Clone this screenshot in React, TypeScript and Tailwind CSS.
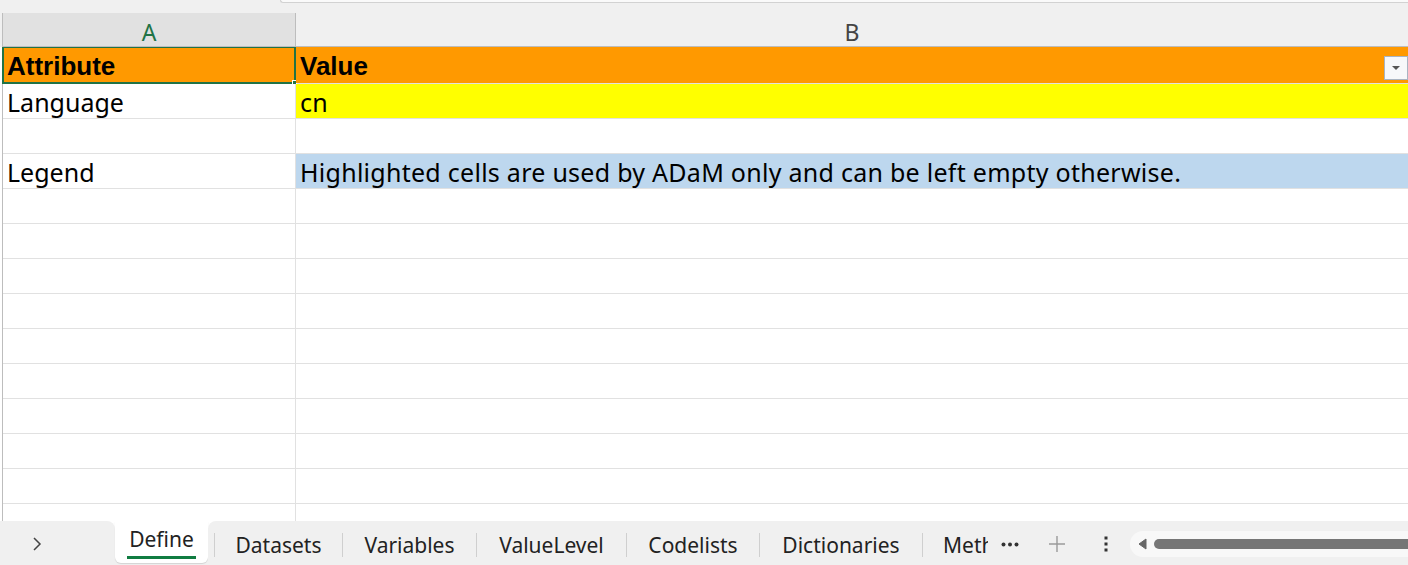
import React from "react";

const FONT = { fontFamily: '"Noto Sans", "Liberation Sans", Arial, sans-serif' };
const BOLDFONT = { fontFamily: '"Liberation Sans", Arial, sans-serif' };

function Row({
  a,
  b,
  aBg = "",
  bBg = "",
  bold = false,
  first = false,
  filter = false,
}: {
  a?: string;
  b?: string;
  aBg?: string;
  bBg?: string;
  bold?: boolean;
  first?: boolean;
  filter?: boolean;
}) {
  const txt = bold
    ? "text-[26px] leading-none text-black font-bold pt-[1px]"
    : "text-[25px] leading-none text-black pt-[3px]";
  return (
    <div className={`flex ${first ? "h-[37px]" : "h-[35px]"} border-b border-[#e1e1e1] shrink-0`}>
      <div className={`relative w-[293px] shrink-0 border-r border-[#e1e1e1] flex items-center pl-[4px] ${aBg}`}>
        {first && (
          <div className="absolute left-[-1px] top-[-1px] right-[-1px] bottom-[-1px] border-2 border-[#217346] pointer-events-none">
            <div className="absolute right-[-3px] bottom-[-3px] w-[5px] h-[5px] bg-[#217346] border border-white" />
          </div>
        )}
        <span className={txt} style={bold ? BOLDFONT : undefined}>
          {a}
        </span>
      </div>
      <div className={`relative flex-1 flex items-center pl-[4px] ${bBg}`}>
        <span className={`${txt} whitespace-nowrap ${bold ? "" : "tracking-[0.27px]"}`} style={bold ? BOLDFONT : undefined}>
          {b}
        </span>
        {filter && (
          <div className="absolute right-0 top-[9px] w-[24px] h-[24px] bg-[#f7f8fa] border border-[#a9b4c2] flex items-center justify-center">
            <svg width="10" height="6" viewBox="0 0 10 6">
              <path d="M1 1 L9 1 L5 5 Z" fill="#555" />
            </svg>
          </div>
        )}
      </div>
    </div>
  );
}

const tabs: { label: string; w: string }[] = [
  { label: "Datasets", w: "w-[127px]" },
  { label: "Variables", w: "w-[133px]" },
  { label: "ValueLevel", w: "w-[149px]" },
  { label: "Codelists", w: "w-[132px]" },
  { label: "Dictionaries", w: "w-[162px]" },
];

export default function App() {
  return (
    <div className="w-[1408px] h-[565px] overflow-hidden bg-[#f0f0f0] flex flex-col" style={FONT}>
      {/* top strip */}
      <div className="h-[13px] flex shrink-0">
        <div className="w-[280px] shrink-0" />
        <div className="flex-1 h-[3px] bg-[#fafafa] border-b border-l border-[#d2d2d2] rounded-bl-[6px]" />
      </div>
      {/* column headers */}
      <div className="h-[34px] flex shrink-0 pl-[2px]">
        <div className="w-[294px] shrink-0 bg-[#e1e1e1] border-l border-[#bdbdbd] border-r border-r-[#bdbdbd] border-b border-b-[#bdbdbd] flex items-center justify-center text-[23px] leading-none pt-[5px] text-[#217346]">
          A
        </div>
        <div className="flex-1 border-b border-[#bdbdbd] flex items-center justify-center text-[23px] leading-none pt-[5px] text-[#444]">
          B
        </div>
      </div>
      {/* grid */}
      <div className="flex-1 bg-white pl-[2px] overflow-hidden">
        <div className="border-l border-[#bdbdbd] h-full flex flex-col">
          <Row a="Attribute" b="Value" aBg="bg-[#ff9900]" bBg="bg-[#ff9900]" bold first filter />
          <Row a="Language" b="cn" bBg="bg-[#ffff00]" />
          <Row />
          <Row a="Legend" b="Highlighted cells are used by ADaM only and can be left empty otherwise." bBg="bg-[#bdd7ee]" />
          <Row />
          <Row />
          <Row />
          <Row />
          <Row />
          <Row />
          <Row />
          <Row />
          <Row />
          <Row />
        </div>
      </div>
      {/* tab bar */}
      <div className="h-[44px] shrink-0 bg-white flex">
        <div className="w-[115px] shrink-0 bg-[#f0f0f0] rounded-tr-[8px] flex items-center pl-[31px] pt-[2px]">
          <svg width="12" height="16" viewBox="0 0 12 16">
            <path d="M3 2 L9 8 L3 14" stroke="#444" strokeWidth="1.5" fill="none" />
          </svg>
        </div>
        <div className="w-[93px] shrink-0 bg-[#f0f0f0] flex flex-col">
          <div className="h-[42px] bg-white rounded-b-[6px] shadow-[0_1px_1px_rgba(0,0,0,0.12)] flex flex-col items-center justify-center">
            <span className="text-[21px] text-[#222] leading-none mt-[3px]">Define</span>
            <div className="w-[69px] h-[3px] bg-[#107c41] mt-[6px]" />
          </div>
        </div>
        <div className="flex-1 bg-[#f0f0f0] rounded-tl-[8px] flex items-center">
          <div className="w-[780px] shrink-0 overflow-hidden flex items-center h-full">
            <div className="w-[6px] shrink-0" />
            {tabs.map((t) => (
              <React.Fragment key={t.label}>
                <div className="w-px h-[24px] bg-[#cfcfcf] shrink-0 mt-[4px]" />
                <div className={`${t.w} shrink-0 flex items-center justify-center text-[21px] leading-none text-[#222] pt-[5px]`}>
                  {t.label}
                </div>
              </React.Fragment>
            ))}
            <div className="w-px h-[24px] bg-[#cfcfcf] shrink-0 mt-[4px]" />
            <div className="w-[100px] shrink-0 pl-[20px] text-[21px] leading-none text-[#222] pt-[5px] whitespace-nowrap">
              Methods
            </div>
          </div>
          <div className="flex-1 flex items-center h-full pt-[2px]">
            <div className="w-[44px] shrink-0 flex justify-center">
              <svg width="18" height="5" viewBox="0 0 18 5">
                <circle cx="2.5" cy="2.5" r="2" fill="#333" />
                <circle cx="9" cy="2.5" r="2" fill="#333" />
                <circle cx="15.5" cy="2.5" r="2" fill="#333" />
              </svg>
            </div>
            <div className="w-[50px] shrink-0 flex justify-center">
              <svg width="18" height="18" viewBox="0 0 18 18">
                <path d="M9 1 V17 M1 9 H17" stroke="#9a9a9a" strokeWidth="1.4" />
              </svg>
            </div>
            <div className="w-[48px] shrink-0 flex justify-center">
              <svg width="4" height="16" viewBox="0 0 4 16">
                <rect x="0.5" y="0.5" width="3" height="3" fill="#333" />
                <rect x="0.5" y="6.5" width="3" height="3" fill="#333" />
                <rect x="0.5" y="12.5" width="3" height="3" fill="#333" />
              </svg>
            </div>
            <div className="flex-1 h-[26px] bg-[#f8f8f8] rounded-l-full flex items-center pl-[7px] -mr-[20px]">
              <svg width="10" height="12" viewBox="0 0 10 12">
                <path d="M9 1 L2 6 L9 11 Z" fill="#666" stroke="#666" strokeLinejoin="round" />
              </svg>
              <div className="flex-1 h-[10px] bg-[#767676] rounded-full ml-[7px]" />
            </div>
          </div>
        </div>
      </div>
    </div>
  );
}
